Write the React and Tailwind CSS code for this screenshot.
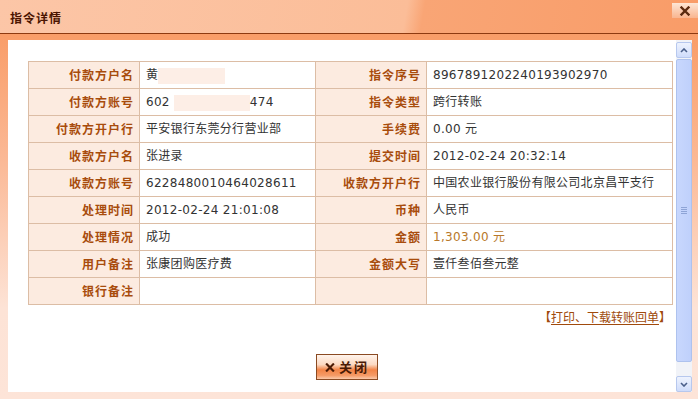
import React from 'react';

const FONT = "font-['DejaVu_Sans','Noto_Sans_CJK_SC',sans-serif]";
const CJK = "font-['Noto_Sans_CJK_SC','DejaVu_Sans',sans-serif]";

const Mask = ({ w }) => (
    <span className={`inline-block h-[16px] bg-[#fdeee6] align-middle ${w}`} />
);

const rows = [
    ['付款方户名', <>黄<Mask w="w-[67px]" /></>, '指令序号', '8967891202240193902970'],
    ['付款方账号', <>602<span className="inline-block w-[4px]" /><Mask w="w-[76px]" />474</>, '指令类型', '跨行转账'],
    ['付款方开户行', '平安银行东莞分行营业部', '手续费', '0.00 元'],
    ['收款方户名', '张进录', '提交时间', '2012-02-24 20:32:14'],
    ['收款方账号', '6228480010464028611', '收款方开户行', '中国农业银行股份有限公司北京昌平支行'],
    ['处理时间', '2012-02-24 21:01:08', '币种', '人民币'],
    ['处理情况', '成功', '金额', <span className="text-[#b8782a]">1,303.00 元</span>],
    ['用户备注', '张康团购医疗费', '金额大写', '壹仟叁佰叁元整'],
    ['银行备注', '', '', ''],
];

function XIcon({ className }) {
    return (
        <svg viewBox="0 0 10 10" className={className}>
            <path d="M1.5 1.5 L8.5 8.5 M8.5 1.5 L1.5 8.5" stroke="currentColor" strokeWidth="2.4" strokeLinecap="square" />
        </svg>
    );
}

function Label({ children }) {
    return (
        <td className={`h-[27px] border border-[#dcbda5] bg-[#fcebe0] pr-[5px] text-right align-middle text-[12px] font-bold tracking-[1px] text-[#a84c0c] ${CJK}`}>
            {children}
        </td>
    );
}

function Value({ children }) {
    return (
        <td className={`h-[27px] border border-[#dcbda5] bg-white pl-[6px] align-middle text-[12px] tracking-[0.3px] text-[#333] whitespace-nowrap ${FONT}`}>
            {children}
        </td>
    );
}

function Scrollbar() {
    return (
        <div className="flex w-[16px] flex-col bg-[#f1f3f8] pt-[2px]">
            {/* up */}
            <div className="flex h-[16px] items-center justify-center rounded-[2px] border border-[#b7c8ee] bg-[linear-gradient(to_bottom,#eef3fe,#cfdcfb)]">
                <svg viewBox="0 0 8 5" className="h-[5px] w-[8px] text-[#4a5f8a]">
                    <path d="M1 4 L4 1 L7 4" stroke="currentColor" strokeWidth="1.6" fill="none" />
                </svg>
            </div>
            {/* thumb */}
            <div className="mt-[1px] flex h-[303px] items-center justify-center rounded-[2px] border border-[#aec2ee] bg-[linear-gradient(to_right,#c8d7fd,#bfd0fb)]">
                <div className="flex flex-col gap-[1px]">
                    <span className="h-px w-[6px] bg-[#8ea4d6]" />
                    <span className="h-px w-[6px] bg-[#8ea4d6]" />
                    <span className="h-px w-[6px] bg-[#8ea4d6]" />
                    <span className="h-px w-[6px] bg-[#8ea4d6]" />
                </div>
            </div>
            <div className="flex-1" />
            {/* down */}
            <div className="flex h-[16px] items-center justify-center rounded-[2px] border border-[#b7c8ee] bg-[linear-gradient(to_bottom,#eef3fe,#cfdcfb)]">
                <svg viewBox="0 0 8 5" className="h-[5px] w-[8px] text-[#4a5f8a]">
                    <path d="M1 1 L4 4 L7 1" stroke="currentColor" strokeWidth="1.6" fill="none" />
                </svg>
            </div>
        </div>
    );
}

export default function App() {
    return (
        <div className="flex h-[399px] w-[698px] flex-col overflow-hidden bg-white">
            {/* Header */}
            <div className="flex h-[34px] shrink-0 items-start justify-between border-b border-[#8e3a10] bg-[linear-gradient(100deg,#fcc6a7_0%,#fbbd98_58%,#f9a575_60.5%,#f99c68_100%)]">
                <div className={`pl-[10px] pt-[9px] text-[12px] font-bold tracking-[1px] text-[#4a1400] ${CJK}`}>指令详情</div>
                <div className="mt-[3px] flex h-[15px] w-[26px] items-center justify-center bg-[linear-gradient(to_bottom,#fde5d4,#f9b590)] text-[#5a2a10]">
                    <XIcon className="h-[10px] w-[12px]" />
                </div>
            </div>

            {/* Body frame */}
            <div className="flex flex-1 bg-[linear-gradient(to_bottom,#f99d68_0%,#fbb996_35%,#fde3d6_75%,#fde4d8_100%)] pb-[7px] pl-[8px] pr-[6px] pt-[6px]">
                <div className="flex flex-1">
                    <div className="flex-1 bg-white pl-[20px] pt-[21px]">
                        <table className="w-[644px] table-fixed border-collapse">
                            <colgroup>
                                <col className="w-[111px]" />
                                <col className="w-[176px]" />
                                <col className="w-[111px]" />
                                <col className="w-[246px]" />
                            </colgroup>
                            <tbody>
                                {rows.map((r, i) => (
                                    <tr key={i}>
                                        <Label>{r[0]}</Label>
                                        <Value>{r[1]}</Value>
                                        <Label>{r[2]}</Label>
                                        <Value>{r[3]}</Value>
                                    </tr>
                                ))}
                            </tbody>
                        </table>

                        {/* Receipt link */}
                        <div className={`mt-[3px] w-[643px] text-right text-[12px] text-[#a04a0c] ${CJK}`}>
                            【<span className="underline underline-offset-2">打印、下载转账回单</span>】
                        </div>

                        {/* Close button */}
                        <div className="mt-[28px] flex w-[644px] justify-center">
                            <button className={`ml-[-6px] flex h-[26px] w-[62px] items-center justify-center gap-[4px] border border-[#8a4a22] bg-[linear-gradient(to_bottom,#fff4ec_0%,#fcd9c2_40%,#f28447_62%,#f59a66_85%,#fbc9aa_100%)] text-[13px] font-bold text-[#4a1a05] ${CJK}`}>
                                <XIcon className="h-[9px] w-[10px]" />
                                <span className="tracking-[2px]">关闭</span>
                            </button>
                        </div>
                    </div>
                    <Scrollbar />
                </div>
            </div>
        </div>
    );
}
